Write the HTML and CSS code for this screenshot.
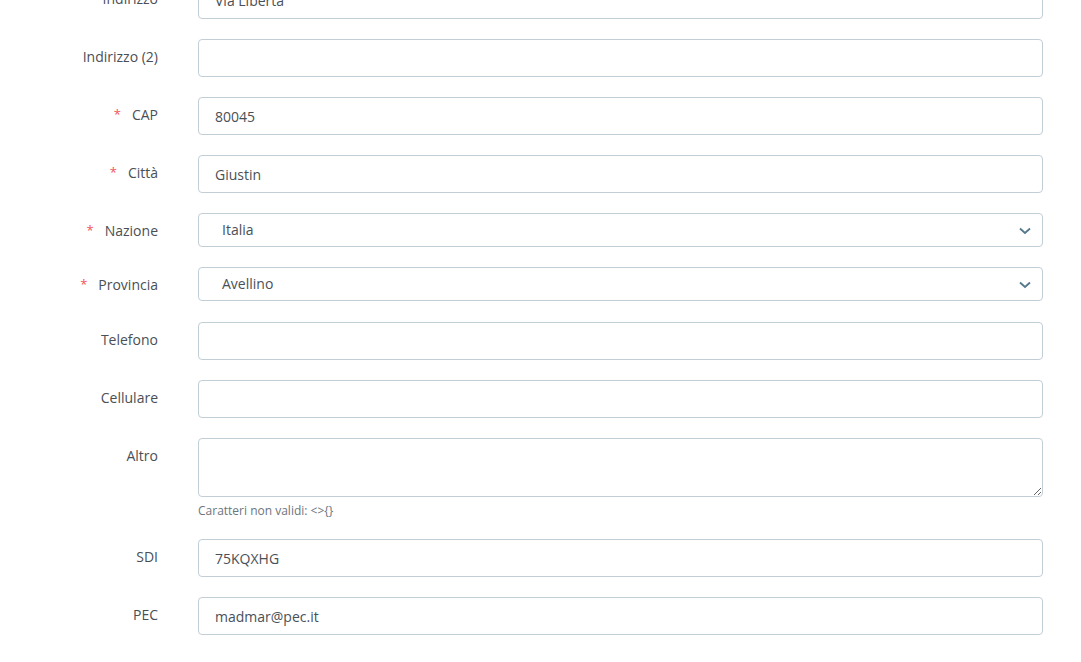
FILE: index.html
```html
<!DOCTYPE html>
<html lang="it">
<head>
<meta charset="utf-8">
<title>Dati</title>
<link rel="stylesheet" href="styles.css">
</head>
<body>
<form class="form">
  <div class="row">
    <label class="lbl">Indirizzo</label>
    <div class="field"><input class="inp" type="text" value="Via Libertà"></div>
  </div>
  <div class="row">
    <label class="lbl">Indirizzo (2)</label>
    <div class="field"><input class="inp" type="text" value=""></div>
  </div>
  <div class="row">
    <label class="lbl"><span class="req">*</span>CAP</label>
    <div class="field"><input class="inp" type="text" value="80045"></div>
  </div>
  <div class="row">
    <label class="lbl"><span class="req">*</span>Città</label>
    <div class="field"><input class="inp" type="text" value="Giustin"></div>
  </div>
  <div class="row">
    <label class="lbl"><span class="req">*</span>Nazione</label>
    <div class="field">
      <div class="sel"><span>Italia</span>
        <svg class="chev" width="12" height="8" viewBox="0 0 12 8"><path d="M1 1.5 L6 6 L11 1.5" fill="none" stroke="#55788e" stroke-width="1.8"/></svg>
      </div>
    </div>
  </div>
  <div class="row">
    <label class="lbl"><span class="req">*</span>Provincia</label>
    <div class="field">
      <div class="sel"><span>Avellino</span>
        <svg class="chev" width="12" height="8" viewBox="0 0 12 8"><path d="M1 1.5 L6 6 L11 1.5" fill="none" stroke="#55788e" stroke-width="1.8"/></svg>
      </div>
    </div>
  </div>
  <div class="row row-tel">
    <label class="lbl">Telefono</label>
    <div class="field"><input class="inp" type="text" value=""></div>
  </div>
  <div class="row">
    <label class="lbl">Cellulare</label>
    <div class="field"><input class="inp" type="text" value=""></div>
  </div>
  <div class="row">
    <label class="lbl">Altro</label>
    <div class="field">
      <textarea class="ta"></textarea>
      <div class="help">Caratteri non validi: &lt;&gt;{}</div>
    </div>
  </div>
  <div class="row">
    <label class="lbl">SDI</label>
    <div class="field"><input class="inp" type="text" value="75KQXHG"></div>
  </div>
  <div class="row">
    <label class="lbl">PEC</label>
    <div class="field"><input class="inp" type="text" value="madmar@pec.it"></div>
  </div>
</form>
</body>
</html>
```
FILE: styles.css
```css
html, body {
  margin: 0;
  padding: 0;
  background: #ffffff;
  overflow: hidden;
}
body {
  font-family: "Open Sans", "Liberation Sans", sans-serif;
  font-size: 14px;
  color: #495057;
}
.form {
  margin-top: -19px;
  display: flex;
  flex-direction: column;
  gap: 20px;
  padding-right: 38px;
}
.row {
  display: grid;
  grid-template-columns: 158px 1fr;
  column-gap: 40px;
  align-items: start;
}
.row-tel {
  margin-top: 1px;
}
.lbl {
  text-align: right;
  padding-top: 7px;
  line-height: 21px;
  color: #4a4f55;
  white-space: nowrap;
}
.req {
  color: #f2545b;
  font-size: 13px;
  margin-right: 11px;
  position: relative;
  top: -1px;
}
.field {
  display: flex;
  flex-direction: column;
}
.inp {
  box-sizing: border-box;
  height: 38px;
  width: 100%;
  border: 1px solid #c2ced6;
  border-radius: 4px;
  padding: 0 16px;
  font-family: inherit;
  font-size: 14px;
  color: #495057;
  background: #fff;
  outline: none;
}
.sel {
  box-sizing: border-box;
  height: 34px;
  border: 1px solid #c2ced6;
  border-radius: 4px;
  padding: 0 11px 0 23px;
  display: flex;
  align-items: center;
  justify-content: space-between;
  color: #495057;
  line-height: 20px;
}
.chev {
  display: block;
  margin-top: 1px;
}
.ta {
  box-sizing: border-box;
  height: 59px;
  width: 100%;
  border: 1px solid #c2ced6;
  border-radius: 4px;
  font-family: inherit;
  font-size: 14px;
  resize: vertical;
  display: block;
  outline: none;
}
.help {
  margin-top: 5px;
  font-size: 12px;
  line-height: 17px;
  color: #6c757d;
}
```
